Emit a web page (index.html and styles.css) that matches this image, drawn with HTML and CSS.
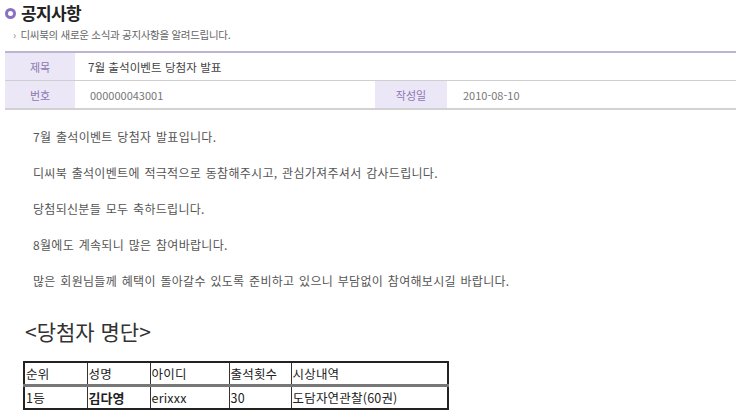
FILE: index.html
```html
<!DOCTYPE html>
<html lang="ko">
<head>
<meta charset="utf-8">
<link rel="stylesheet" href="styles.css">
</head>
<body>
<div class="page">
  <div class="head">
    <span class="ring"></span>
    <h1 class="title">공지사항</h1>
  </div>
  <p class="sub"><span class="arr">›</span> 디씨북의 새로운 소식과 공지사항을 알려드립니다.</p>

  <div class="info">
    <div class="row">
      <div class="lbl">제목</div>
      <div class="val subject">7월 출석이벤트 당첨자 발표</div>
    </div>
    <div class="row">
      <div class="lbl">번호</div>
      <div class="val num">000000043001</div>
      <div class="lbl lbl2">작성일</div>
      <div class="val num">2010-08-10</div>
    </div>
  </div>

  <div class="content">
    <p>7월 출석이벤트 당첨자 발표입니다.</p>
    <p>디씨북 출석이벤트에 적극적으로 동참해주시고, 관심가져주셔서 감사드립니다.</p>
    <p>당첨되신분들 모두 축하드립니다.</p>
    <p>8월에도 계속되니 많은 참여바랍니다.</p>
    <p>많은 회원님들께 혜택이 돌아갈수 있도록 준비하고 있으니 부담없이 참여해보시길 바랍니다.</p>
  </div>

  <h2 class="list-title">&lt;당첨자 명단&gt;</h2>

  <table class="winners">
    <colgroup>
      <col class="c1"><col class="c2"><col class="c3"><col class="c4"><col class="c5">
    </colgroup>
    <tr class="hrow"><td>순위</td><td>성명</td><td>아이디</td><td>출석횟수</td><td>시상내역</td></tr>
    <tr><td>1등</td><td class="name">김다영</td><td>erixxx</td><td>30</td><td>도담자연관찰(60권)</td></tr>
  </table>
</div>
</body>
</html>
```

FILE: styles.css
```css
html, body {
  margin: 0;
  padding: 0;
  background: #fff;
}
body {
  font-family: "Noto Sans CJK KR", "Noto Sans", sans-serif;
  color: #555;
}
.page {
  width: 731px;
  padding: 0 4px 0 5px;
}
.head {
  display: flex;
  align-items: center;
  height: 26px;
  gap: 5px;
}
.ring {
  width: 5px;
  height: 5px;
  border: 3px solid #8a6fc2;
  border-radius: 50%;
}
.title {
  margin: 0;
  font-size: 17px;
  font-weight: 700;
  color: #222;
  line-height: 26px;
  letter-spacing: -0.6px;
}
.sub {
  margin: 1px 0 0 8px;
  font-size: 10.5px;
  color: #666;
  line-height: 16px;
  letter-spacing: -0.3px;
}
.arr {
  color: #888;
  margin-right: 2px;
}
.info {
  margin-top: 8px;
  border-top: 2px solid #bcb4d0;
}
.row {
  display: flex;
  height: 27px;
  border-bottom: 1px solid #cfcfcf;
  align-items: stretch;
}
.row + .row {
  border-bottom: 2px solid #d2d2d2;
}
.lbl {
  width: 70px;
  flex: none;
  background: #ece7f6;
  color: #8a78b4;
  font-size: 11px;
  display: flex;
  align-items: center;
  justify-content: center;
}
.lbl2 {
  width: 72px;
}
.val {
  display: flex;
  align-items: center;
  padding-left: 14px;
  font-size: 12px;
  color: #444;
}
.val.subject {
  padding-left: 13px;
  font-size: 11.6px;
}
.val.num {
  font-size: 11px;
  color: #777;
  width: 285px;
  flex: none;
  padding-left: 15px;
}
.val.num:last-child {
  width: auto;
  padding-left: 16px;
}
.content {
  padding: 17px 0 0 28px;
}
.content p {
  margin: 0 0 17px;
  font-size: 12px;
  line-height: 19px;
  color: #555;
  letter-spacing: 0.3px;
  word-spacing: 1px;
}
.list-title {
  margin: 28px 0 0 20px;
  font-size: 21px;
  font-weight: 400;
  color: #333;
  line-height: 26px;
}
.winners {
  margin: 17px 0 0 18px;
  border-collapse: collapse;
  width: 424px;
  table-layout: fixed;
  border: 2px solid #222;
  font-size: 12.5px;
  color: #222;
}
.c1 { width: 63px; }
.c2 { width: 63px; }
.c3 { width: 79px; }
.c4 { width: 62px; }
.c5 { width: 157px; }
.winners td {
  border: 1px solid #333;
  height: 21px;
  padding: 0 1px;
  line-height: 21px;
  letter-spacing: 0.2px;
}
.winners .hrow td {
  border-bottom: 3px solid #777;
}
.winners .name {
  font-weight: 700;
  font-size: 13px;
  letter-spacing: 0;
}
```
